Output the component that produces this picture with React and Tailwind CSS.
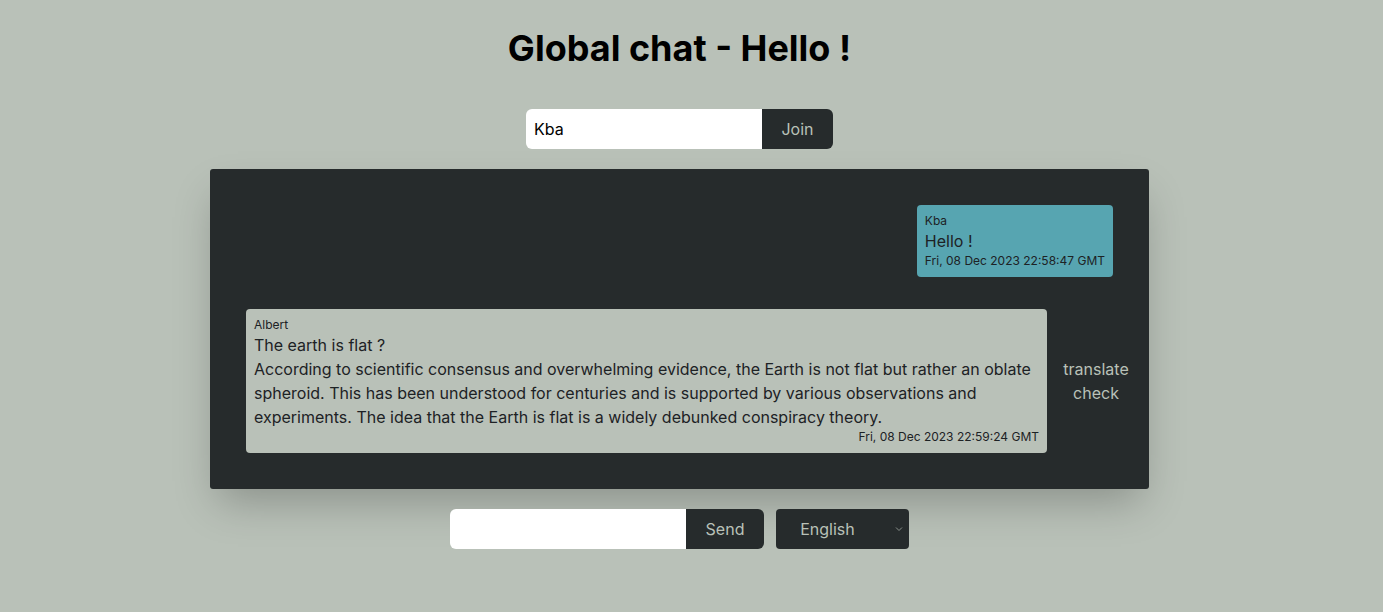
import React from "react";

const font = { fontFamily: "Inter, 'Noto Sans', sans-serif" };

const Bubble = ({ name, children, date, mine }) => (
    <div className={`${mine ? "bg-[#57a5b1] w-fit" : "bg-[#b9c1b8] w-[801px]"} rounded-[4px] px-2 py-2 text-[#1d2225] shrink-0`}>
        <div className="text-xs leading-4">{name}</div>
        <div className="text-base leading-6">{children}</div>
        <div className="text-xs leading-4 text-right whitespace-nowrap">{date}</div>
    </div>
);

export default function App() {
    return (
        <div className="min-h-[612px] bg-[#b9c1b8] pr-6" style={font}>
            <div className="flex flex-col items-center pt-7">
                <h1 className="text-4xl leading-10 font-bold text-black">Global chat - Hello !</h1>

                <div className="flex mt-[41px] h-10">
                    <input
                        defaultValue="Kba"
                        className="w-[236px] h-10 bg-white rounded-l-md px-2 text-base text-black outline-none"
                    />
                    <button className="w-[71px] h-10 bg-[#262b2c] text-[#b9c1b8] rounded-r-md text-base">Join</button>
                </div>

                <div className="mt-5 w-[939px] h-[320px] bg-[#262b2c] rounded-[3px] shadow-[0_20px_40px_-8px_rgba(0,0,0,0.25)] p-9 flex flex-col gap-8">
                    <div className="flex justify-end">
                        <Bubble name="Kba" date="Fri, 08 Dec 2023 22:58:47 GMT" mine>Hello !</Bubble>
                    </div>
                    <div className="flex items-center">
                        <Bubble name="Albert" date="Fri, 08 Dec 2023 22:59:24 GMT">
                            The earth is flat ?
                            <br />
                            According to scientific consensus and overwhelming evidence, the Earth is not flat but rather an oblate spheroid. This has been understood for centuries and is supported by various observations and experiments. The idea that the Earth is flat is a widely debunked conspiracy theory.
                        </Bubble>
                        <button className="w-[98px] shrink-0 text-center text-base leading-6 text-[#b9c1b8]">
                            translate
                            <br />
                            check
                        </button>
                    </div>
                </div>

                <div className="flex mt-5 h-10 gap-3">
                    <div className="flex">
                        <input className="w-[236px] h-10 bg-white rounded-l-md px-2 text-base text-black outline-none" />
                        <button className="w-[78px] h-10 bg-[#262b2c] text-[#b9c1b8] rounded-r-md text-base">Send</button>
                    </div>
                    <div className="relative w-[133px] h-10 bg-[#262b2c] rounded-[4px] flex items-center">
                        <span className="w-[103px] text-center text-base text-[#b9c1b8]">English</span>
                        <svg className="absolute right-[6px] top-[17px]" width="8" height="6" viewBox="0 0 8 6" fill="none">
                            <path d="M1 1.5 L4 4.5 L7 1.5" stroke="#8a918c" strokeWidth="1" />
                        </svg>
                    </div>
                </div>
            </div>
        </div>
    );
}
